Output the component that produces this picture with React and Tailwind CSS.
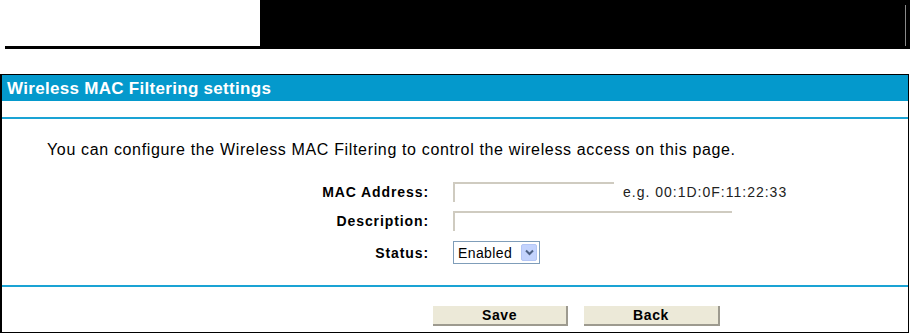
import React from 'react';

const sans = { fontFamily: '"Liberation Sans", Arial, sans-serif' };

function Field({ label, children }) {
  return (
    <div className="flex items-center">
      <div className="w-[427px] text-right text-[14px] font-bold tracking-[0.9px] text-black leading-none">
        {label}
      </div>
      <div className="ml-[24px] flex items-center">{children}</div>
    </div>
  );
}

export default function App() {
  return (
    <div className="w-[910px] h-[334px] bg-white overflow-hidden" style={sans}>
      {/* top banner */}
      <div className="flex h-[49px]">
        <div className="w-[260px] pl-[5px] flex">
          <div className="flex-1 border-b-[3px] border-black" />
        </div>
        <div className="flex-1 bg-black flex justify-end pt-[5px] pb-[3px] pr-[4px]">
          <div className="w-[1px] bg-[#8a8a8a]" />
        </div>
      </div>

      {/* panel */}
      <div className="mt-[25px] w-[909px] h-[259px] border border-l-2 border-black flex flex-col">
        <div className="h-[26px] bg-[#0499cc] flex items-center pl-[5px]">
          <span className="text-white font-bold text-[17px] tracking-[0.3px] leading-none">
            Wireless MAC Filtering settings
          </span>
        </div>
        <div className="h-[16px]" />
        <div className="h-[2px] bg-[#1aa3d4]" />

        <div className="h-[166px] pt-[21px]">
          <p className="pl-[45px] text-[16px] tracking-[0.65px] leading-[19px] text-black">
            You can configure the Wireless MAC Filtering to control the wireless access on this page.
          </p>

          <div className="mt-[23px] flex flex-col gap-[9px]">
            <Field label="MAC Address:">
              <div className="w-[161px] h-[20px] border-t-2 border-l-2 border-[#cfcbc0]" />
              <span className="ml-[9px] text-[14px] tracking-[1px] text-[#222] leading-none">
                e.g. 00:1D:0F:11:22:33
              </span>
            </Field>
            <Field label="Description:">
              <div className="w-[279px] h-[20px] border-t-2 border-l-2 border-[#cfcbc0]" />
            </Field>
            <div className="mt-[1px]">
              <Field label="Status:">
                <div className="w-[87px] h-[23px] border border-[#7f9db9] bg-white flex items-center justify-between pl-[4px] pr-[2px]">
                  <span className="text-[14px] tracking-[0.4px] text-black leading-none">Enabled</span>
                  <div className="w-[16px] h-[17px] rounded-[2px] bg-[#c3d3fd] border border-[#b4c6f5] flex items-center justify-center">
                    <svg width="9" height="7" viewBox="0 0 9 7">
                      <path d="M1 1.5 L4.5 5 L8 1.5" stroke="#4d6185" strokeWidth="2" fill="none" />
                    </svg>
                  </div>
                </div>
              </Field>
            </div>
          </div>
        </div>

        <div className="h-[2px] bg-[#1aa3d4]" />
        <div className="flex-1 pt-[19px] pl-[431px] flex gap-[16px] items-start">
          <button className="w-[135px] h-[20px] bg-[#ece9d8] border-r-2 border-b-2 border-[#9d9a8f] text-[14px] font-bold tracking-[0.6px] text-black leading-none">
            Save
          </button>
          <button className="w-[136px] h-[20px] bg-[#ece9d8] border-r-2 border-b-2 border-[#9d9a8f] text-[14px] font-bold tracking-[0.6px] text-black leading-none">
            Back
          </button>
        </div>
      </div>
    </div>
  );
}
